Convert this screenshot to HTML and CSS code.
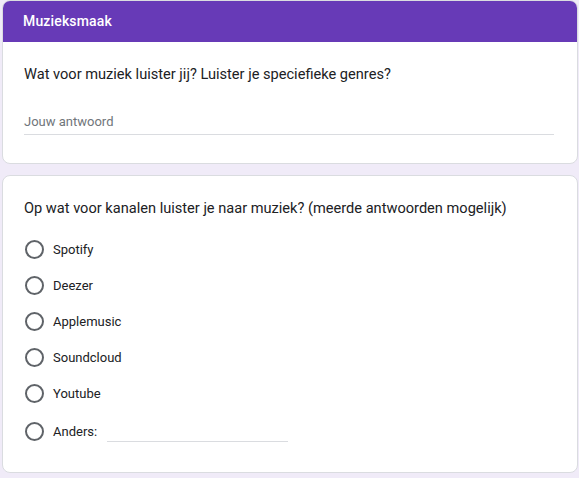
FILE: index.html
```html
<!DOCTYPE html>
<html lang="nl">
<head>
<meta charset="utf-8">
<link rel="stylesheet" href="styles.css">
</head>
<body>
<div class="page">
  <section class="card">
    <div class="card-head">Muzieksmaak</div>
    <div class="card-body">
      <div class="question">Wat voor muziek luister jij? Luister je speciefieke genres?</div>
      <div class="answer">Jouw antwoord</div>
    </div>
  </section>
  <section class="card card2">
    <div class="card-body">
      <div class="question">Op wat voor kanalen luister je naar muziek? (meerde antwoorden mogelijk)</div>
      <ul class="options">
        <li class="option"><span class="radio"></span><span class="label">Spotify</span></li>
        <li class="option"><span class="radio"></span><span class="label">Deezer</span></li>
        <li class="option"><span class="radio"></span><span class="label">Applemusic</span></li>
        <li class="option"><span class="radio"></span><span class="label">Soundcloud</span></li>
        <li class="option"><span class="radio"></span><span class="label">Youtube</span></li>
        <li class="option option-other"><span class="radio"></span><span class="label">Anders:</span><span class="other-line"></span></li>
      </ul>
    </div>
  </section>
</div>
</body>
</html>
```
FILE: styles.css
```css
html, body {
  margin: 0;
  padding: 0;
  background: #f0ebf8;
}
body {
  font-family: Roboto, "Open Sans", Arial, sans-serif;
  color: #202124;
}
.page {
  width: 576px;
  margin-left: 2px;
  display: flex;
  flex-direction: column;
  gap: 11px;
}
.card {
  background: #fff;
  border: 1px solid #dadce0;
  border-radius: 8px;
  overflow: hidden;
}
.card-head {
  background: #673ab7;
  color: #fff;
  font-size: 14px;
  font-weight: 500;
  letter-spacing: 0.15px;
  height: 42px;
  line-height: 42px;
  padding-left: 21px;
  margin: -1px -1px 0 -1px;
}
.card-body {
  padding: 22px 23px 28px 21px;
}
.question {
  font-size: 14.6px;
  line-height: 20px;
}
.answer {
  margin-top: 30px;
  font-size: 13px;
  color: #70757a;
  padding-bottom: 5px;
  border-bottom: 1px solid #dadce0;
}
.card2 .card-body {
  padding-top: 22px;
  padding-bottom: 31px;
}
.options {
  list-style: none;
  margin: 21px 0 0 0;
  padding: 0;
  display: flex;
  flex-direction: column;
  gap: 16px;
}
.option {
  display: flex;
  align-items: center;
  height: 20px;
  font-size: 13px;
}
.option-other {
  margin-top: 2px;
}
.radio {
  width: 15px;
  height: 15px;
  border: 2px solid #5f6368;
  border-radius: 50%;
  margin-left: 1px;
  margin-right: 9px;
  flex: none;
}
.other-line {
  width: 181px;
  margin-left: 10px;
  align-self: flex-end;
  margin-bottom: -1px;
  border-bottom: 1px solid #dadce0;
}
```
